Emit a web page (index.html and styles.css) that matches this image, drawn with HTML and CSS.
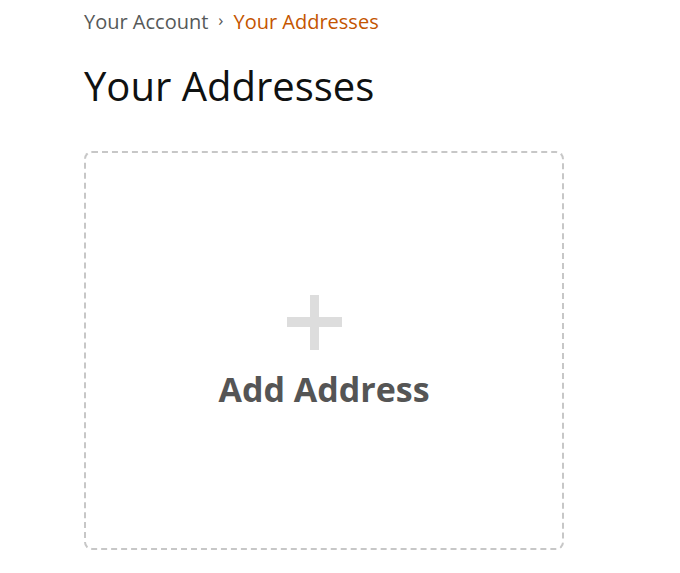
FILE: index.html
```html
<!DOCTYPE html>
<html lang="en">
<head>
    <meta charset="UTF-8">
    <meta name="viewport" content="width=device-width, initial-scale=1.0">
    <title>Your Addresses</title>
    <link rel="stylesheet" href="styles.css">
</head>
<body>
    <div class="page">
        <div class="breadcrumb">
            <a href="#" class="crumb">Your Account</a>
            <span class="divider">›</span>
            <a href="#" class="crumb current">Your Addresses</a>
        </div>
        <h1 class="page-title">Your Addresses</h1>
        <div class="address-grid">
            <a href="#" class="add-address">
                <div class="plus-icon"></div>
                <h2 class="add-label">Add Address</h2>
            </a>
        </div>
    </div>
</body>
</html>
```

FILE: styles.css
```css
body {
    margin: 0;
    font-family: 'Open Sans', 'Noto Sans', Arial, sans-serif;
    background-color: #fff;
    color: #0f1111;
}

.page {
    padding: 5px 0 0 84px;
}

.breadcrumb {
    display: flex;
    align-items: center;
    gap: 10px;
    font-size: 20px;
    line-height: 30px;
}

.crumb {
    color: #565959;
    text-decoration: none;
}

.crumb.current {
    color: #c45500;
}

.divider {
    color: #555;
    font-size: 17px;
    margin-bottom: 3px;
}

.page-title {
    margin: 23px 0 0;
    font-size: 40px;
    font-weight: 400;
    line-height: 50px;
}

.address-grid {
    margin-top: 40px;
}

.add-address {
    display: flex;
    flex-direction: column;
    align-items: center;
    justify-content: center;
    width: 480px;
    height: 399px;
    box-sizing: border-box;
    border: 2px dashed #c7c7c7;
    border-radius: 8px;
    text-decoration: none;
}

.plus-icon {
    position: relative;
    width: 55px;
    height: 55px;
    margin: 2px 19px 0 0;
}

.plus-icon::before,
.plus-icon::after {
    content: '';
    position: absolute;
    background-color: #dddddd;
}

.plus-icon::before {
    left: 0;
    top: 22px;
    width: 55px;
    height: 10px;
}

.plus-icon::after {
    left: 23px;
    top: 0;
    width: 9px;
    height: 55px;
}

.add-label {
    margin: 19px 0 0;
    font-size: 34px;
    font-weight: 700;
    line-height: 40px;
    color: #555;
}
```
